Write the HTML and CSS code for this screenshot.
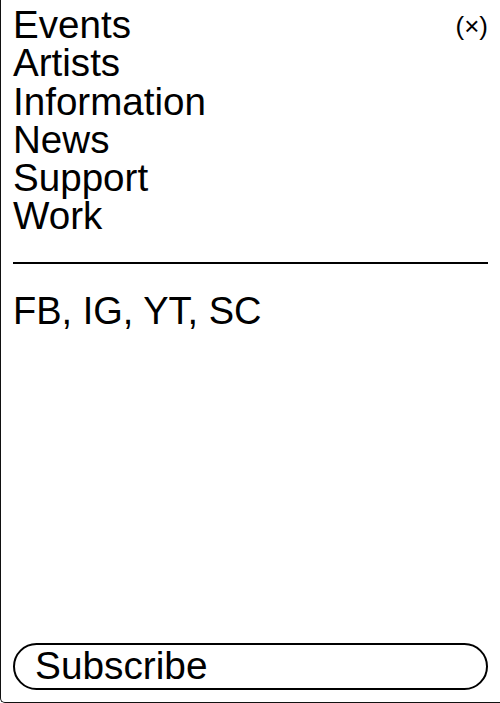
FILE: index.html
```html
<!DOCTYPE html>
<html>
<head>
<meta charset="utf-8">
<link rel="stylesheet" href="styles.css">
</head>
<body>
<div class="panel">
  <div class="top">
    <nav class="nav">
      <a href="#">Events</a>
      <a href="#">Artists</a>
      <a href="#">Information</a>
      <a href="#">News</a>
      <a href="#">Support</a>
      <a href="#">Work</a>
    </nav>
    <button class="close">(×)</button>
  </div>
  <hr class="rule">
  <div class="social">FB, IG, YT, SC</div>
  <div class="spacer"></div>
  <button class="subscribe">Subscribe</button>
</div>
</body>
</html>
```
FILE: styles.css
```css
html, body {
  margin: 0;
  padding: 0;
  background: #fff;
}
body {
  font-family: "Liberation Sans", Arial, sans-serif;
  color: #000;
}
.panel {
  box-sizing: border-box;
  width: 500px;
  height: 703px;
  border-left: 1px solid #111;
  border-bottom: 1px solid #111;
  border-bottom-left-radius: 5px;
  padding: 6px 12px 12px 12px;
  display: flex;
  flex-direction: column;
}
.top {
  display: flex;
  justify-content: space-between;
  align-items: flex-start;
}
.nav {
  display: flex;
  flex-direction: column;
}
.nav a {
  font-size: 38.6px;
  line-height: 38.3px;
  color: #000;
  text-decoration: none;
}
.close {
  font-family: inherit;
  font-size: 26px;
  line-height: 30px;
  background: none;
  border: 0;
  padding: 0;
  margin: 5px 0 0 0;
  color: #000;
}
.rule {
  margin: 26px 0 0 0;
  border: 0;
  border-top: 2px solid #000;
  height: 0;
}
.social {
  margin-top: 28px;
  font-size: 38px;
  line-height: 38.4px;
}
.spacer {
  flex: 1;
}
.subscribe {
  font-family: inherit;
  font-size: 38.8px;
  line-height: 38.4px;
  text-align: left;
  background: #fff;
  color: #000;
  border: 2px solid #000;
  border-radius: 30px;
  padding: 2px 20px 3px 20px;
  width: 100%;
}
```
